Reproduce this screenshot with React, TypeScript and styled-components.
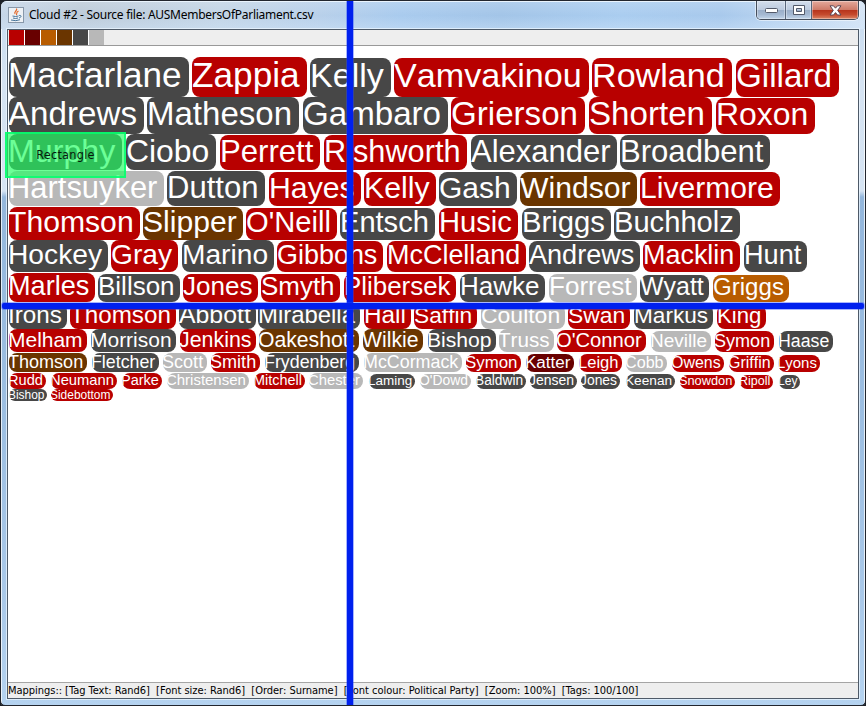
import React from "react";
import styled, { createGlobalStyle } from "styled-components";

const palette = {
  r: "#b80000",
  m: "#680000",
  o: "#b85c00",
  b: "#6a3500",
  d: "#474747",
  l: "#b8b8b8",
};
type Tone = keyof typeof palette;

/* name, tone, left edge, right edge */
type Tag = [string, Tone, number, number];
type Line = { top: number; bottom: number; base: number; tags: Tag[] };

const lines: Line[] = [
  { top: 57, bottom: 97, base: 87, tags: [
    ["Macfarlane", "d", 9, 189], ["Zappia", "r", 192, 307], ["Kelly", "d", 310, 391],
    ["Vamvakinou", "r", 394, 589], ["Rowland", "r", 592, 732], ["Gillard", "r", 736, 839]] },
  { top: 97, bottom: 134, base: 125, tags: [
    ["Andrews", "d", 9, 144], ["Matheson", "d", 147, 299], ["Gambaro", "d", 303, 448],
    ["Grierson", "r", 451, 585], ["Shorten", "r", 589, 712], ["Roxon", "r", 716, 815]] },
  { top: 134, bottom: 170, base: 162, tags: [
    ["Murphy", "d", 9, 122], ["Ciobo", "d", 126, 216], ["Perrett", "r", 220, 320],
    ["Rishworth", "r", 324, 467], ["Alexander", "d", 471, 617], ["Broadbent", "d", 620, 770]] },
  { top: 171, bottom: 206, base: 198, tags: [
    ["Hartsuyker", "l", 9, 164], ["Dutton", "d", 167, 265], ["Hayes", "r", 269, 361],
    ["Kelly", "r", 364, 436], ["Gash", "d", 439, 517], ["Windsor", "b", 520, 637],
    ["Livermore", "r", 640, 780]] },
  { top: 207, bottom: 240, base: 232, tags: [
    ["Thomson", "r", 9, 140], ["Slipper", "b", 143, 243], ["O'Neill", "r", 246, 337],
    ["Entsch", "d", 340, 435], ["Husic", "r", 439, 518], ["Briggs", "d", 522, 611],
    ["Buchholz", "d", 614, 740]] },
  { top: 240, bottom: 272, base: 264, tags: [
    ["Hockey", "d", 9, 108], ["Gray", "r", 111, 178], ["Marino", "d", 182, 274],
    ["Gibbons", "r", 277, 383], ["McClelland", "r", 387, 526], ["Andrews", "d", 529, 640],
    ["Macklin", "r", 643, 740], ["Hunt", "d", 744, 807]] },
  { top: 273, bottom: 302, base: 295, tags: [
    ["Marles", "r", 9, 95], ["Billson", "d", 98, 180], ["Jones", "r", 183, 258],
    ["Smyth", "r", 261, 340], ["Plibersek", "r", 344, 456], ["Hawke", "d", 460, 545],
    ["Forrest", "l", 549, 637], ["Wyatt", "d", 640, 709], ["Griggs", "o", 713, 789]] },
  { top: 303, bottom: 329, base: 323, tags: [
    ["Irons", "d", 9, 67], ["Thomson", "r", 70, 176], ["Abbott", "d", 179, 256],
    ["Mirabella", "d", 258, 360], ["Hall", "r", 364, 411], ["Saffin", "r", 414, 477],
    ["Coulton", "l", 481, 565], ["Swan", "r", 568, 630], ["Markus", "d", 634, 713],
    ["King", "r", 717, 766]] },
  { top: 329, bottom: 352, base: 347, tags: [
    ["Melham", "r", 9, 87], ["Morrison", "d", 91, 176], ["Jenkins", "r", 180, 256],
    ["Oakeshott", "b", 259, 359], ["Wilkie", "b", 363, 423], ["Bishop", "d", 428, 496],
    ["Truss", "l", 499, 554], ["O'Connor", "r", 557, 646], ["Neville", "l", 651, 711],
    ["Symon", "r", 715, 774], ["Haase", "d", 779, 833]] },
  { top: 353, bottom: 372, base: 368, tags: [
    ["Thomson", "b", 9, 87], ["Fletcher", "d", 92, 159], ["Scott", "l", 163, 207],
    ["Smith", "r", 211, 260], ["Frydenberg", "d", 265, 359], ["McCormack", "l", 364, 462],
    ["Symon", "r", 466, 521], ["Katter", "m", 526, 574], ["Leigh", "r", 579, 622],
    ["Cobb", "l", 626, 667], ["Owens", "r", 672, 724], ["Griffin", "r", 729, 774],
    ["Lyons", "r", 778, 820]] },
  { top: 373, bottom: 389, base: 385, tags: [
    ["Rudd", "r", 9, 46], ["Neumann", "r", 51, 117], ["Parke", "r", 122, 162],
    ["Christensen", "l", 167, 249], ["Mitchell", "r", 254, 305], ["Chester", "l", 309, 363],
    ["Laming", "d", 369, 415], ["O'Dowd", "l", 420, 471], ["Baldwin", "d", 476, 526],
    ["Jensen", "d", 530, 577], ["Jones", "d", 581, 620], ["Keenan", "d", 626, 675],
    ["Snowdon", "r", 680, 735], ["Ripoll", "r", 740, 773], ["Ley", "d", 779, 800]] },
  { top: 389, bottom: 401, base: 399, tags: [
    ["Bishop", "d", 9, 47], ["Sidebottom", "r", 51, 113]] },
];

/* Advance widths of the tag typeface, in thousandths of an em. */
const advances: Record<string, number> = {
  f: 278, i: 222, j: 222, l: 222, t: 278, r: 333, m: 833, w: 722, c: 500, k: 500, s: 500,
  v: 500, x: 500, y: 500, z: 500, A: 667, B: 667, C: 722, D: 722, E: 667, F: 611, G: 778,
  H: 722, I: 278, J: 500, K: 667, L: 556, M: 833, N: 722, O: 778, P: 667, R: 722, S: 667,
  T: 611, V: 667, W: 944, Z: 611, "'": 191,
};

/* Small tags start their text just ahead of the box, as does the first column. */
const leadIn = (left: number, height: number) => (left === 9 || height < 24 ? 1 : 0);

const fontSizeFor = (name: string, width: number) => {
  const em = [...name].reduce((sum, ch) => sum + (advances[ch] ?? 556), 0) / 1000;
  return width / (em + 0.21);
};

const GlobalStyle = createGlobalStyle`
  * { box-sizing: border-box; }
  body { margin: 0; overflow: hidden; background: #1d2026; }
`;

const Window = styled.div`
  position: relative;
  width: 866px;
  height: 706px;
  display: flex;
  flex-direction: column;
  border-radius: 7px 7px 5px 5px;
  border: 1px solid #22262e;
  padding: 0 5px 5px;
  background:
    linear-gradient(90deg, rgba(255,255,255,.75) 0 1px, transparent 1px 863px, rgba(255,255,255,.75) 863px),
    linear-gradient(#c7dbf0 0, #d5e3f2 80px, #d6e4f3 190px, #94b7dc 196px, #9dbfe2 420px, #aac9e9 600px, #b5d3f0 706px);
  overflow: hidden;
`;

const TitleBar = styled.header`
  flex: none;
  height: 28px;
  margin: 0 -5px;
  padding: 0 6px 0 7px;
  display: flex;
  align-items: flex-start;
  border-top: 1px solid #eaf4fd;
  background:
    linear-gradient(rgba(255,255,255,.15), transparent 50%, rgba(210,230,250,.4)),
    linear-gradient(90deg, #c6d6e8 0, #bdcbd9 80px, #c3d5e6 220px, #b8d0ea 320px, #a9cbee 400px, #a3c5e8 500px, #aacdf0 620px, #a8c9ec 720px, #c0d8f2 800px, #d5e4f5 864px);
`;

const JavaIcon = styled.svg`
  flex: none;
  width: 16px;
  height: 16px;
  margin-top: 5px;
`;

const Title = styled.h1`
  flex: 1;
  margin: 4px 0 0 5px;
  font: 400 12px/18px "Noto Sans", sans-serif;
  letter-spacing: -0.28px;
  white-space: nowrap;
  color: #000;
`;

const Controls = styled.div`
  display: flex;
  height: 19px;
  margin-top: -1px;
  border: 1px solid #454e5c;
  border-top: 0;
  border-radius: 0 0 5px 5px;
  overflow: hidden;
  box-shadow: 0 0 0 1px rgba(255,255,255,.5);
`;

const Control = styled.button<{ $width: number; $close?: boolean }>`
  width: ${(p) => p.$width}px;
  padding: 0;
  border: 0;
  border-left: ${(p) => (p.$width === 28 ? "0" : "1px solid #59677b")};
  display: flex;
  align-items: center;
  justify-content: center;
  background: ${(p) =>
    p.$close
      ? "linear-gradient(#e4aa9c 0, #cf7b69 48%, #b6331b 50%, #c54a2d 75%, #dc8666 100%)"
      : "linear-gradient(#d3deec 0, #bdcbdf 48%, #9aaec8 50%, #a5b9d2 75%, #c2d5e9 100%)"};
  box-shadow: inset 0 0 0 1px rgba(255,255,255,.35);
`;

const Client = styled.main`
  flex: 1;
  min-height: 0;
  display: flex;
  flex-direction: column;
  border: 1px solid #4e5a68;
  outline: 1px solid rgba(235,245,255,.75);
  margin: 0 1px 1px;
  background: #fff;
`;

const Legend = styled.div`
  flex: none;
  display: flex;
  gap: 1px;
  height: 16px;
  padding-left: 1px;
  background: #eee;
  border-bottom: 1px solid #999;
`;

const Swatch = styled.span<{ $tone: Tone }>`
  width: 15px;
  height: 15px;
  background: ${(p) => palette[p.$tone]};
  box-shadow: 1px 0 #fff;
  &:last-child { box-shadow: none; }
`;

const Cloud = styled.section`
  flex: 1;
  min-height: 0;
  padding-top: 11px;
`;

const Row = styled.div<{ $height: number; $gap: number }>`
  display: flex;
  align-items: flex-end;
  height: ${(p) => p.$height}px;
  margin-bottom: ${(p) => p.$gap}px;
`;

const Chip = styled.span<{ $tone: Tone; $width: number; $lead: number; $height: number }>`
  flex: none;
  display: flex;
  align-items: flex-start;
  width: ${(p) => p.$width}px;
  height: ${(p) => p.$height}px;
  margin-left: ${(p) => p.$lead}px;
  border-radius: ${(p) => Math.min(8, p.$height / 2)}px;
  background: ${(p) => palette[p.$tone]};
`;

const Name = styled.span<{ $size: number; $base: number; $indent: number }>`
  margin-top: ${(p) => p.$base - Math.round(p.$size * 0.905)}px;
  margin-left: ${(p) => -p.$indent}px;
  font-family: "Liberation Sans", Arial, sans-serif;
  font-size: ${(p) => p.$size}px;
  line-height: ${(p) => Math.round(p.$size * 0.905) + Math.round(p.$size * 0.212)}px;
  font-kerning: none;
  font-variant-ligatures: none;
  white-space: nowrap;
  color: #fff;
`;

const StatusBar = styled.footer`
  flex: none;
  height: 16px;
  border-top: 1px solid #a5a5a5;
  background: #eee;
  font: 11px/15px "DejaVu Sans Condensed", "DejaVu Sans", sans-serif;
  font-stretch: condensed;
  letter-spacing: -0.03px;
  white-space: pre;
  color: #000;
`;

const Divider = styled.i<{ $vertical?: boolean }>`
  position: absolute;
  background: #0020ee;
  box-shadow: 0 0 0 1px rgba(40,70,255,.4);
  ${(p) =>
    p.$vertical
      ? "left: 346px; top: -1px; width: 6px; height: 708px;"
      : "left: 1px; top: 302px; width: 862px; height: 6px; border-radius: 2px;"}
`;

const Selection = styled.div`
  position: absolute;
  left: 4px;
  top: 131px;
  width: 121px;
  height: 46px;
  border: 2px solid rgba(0, 255, 110, .8);
  background: rgba(36, 255, 100, .67);
  display: flex;
  align-items: center;
  justify-content: center;
  font: 12.500px/14px "DejaVu Sans Condensed", "DejaVu Sans", sans-serif;
  font-stretch: condensed;
  letter-spacing: 0.300px;
  color: #061a0c;
`;

const App = () => (
  <>
    <GlobalStyle />
    <Window>
      <TitleBar>
        <JavaIcon viewBox="0 0 16 16">
          <rect x=".5" y=".5" width="15" height="15" fill="#edf1f5" stroke="#8898aa" />
          <path d="M8.5 1.5c1.5 2-3 3-1.500 5.500M10.500 4c-3 1.500-1 2.500-2.300 4" fill="none" stroke="#e26a2c" strokeWidth="1.200" />
          <path d="M4.500 9q3 1 6 0M5 11q2.500 1 5 0M3 13q5 1.500 9-.3M11 8.500c3-.6 2.500 2 0 2.500" fill="none" stroke="#46749a" />
        </JavaIcon>
        <Title>Cloud #2 - Source file: AUSMembersOfParliament.csv</Title>
        <Controls>
          <Control $width={28} aria-label="Minimize">
            <svg width="13" height="6"><rect x=".5" y=".5" width="12" height="4" rx="1" fill="#fff" stroke="#535a6a" transform="translate(0 1)" /></svg>
          </Control>
          <Control $width={26} aria-label="Maximize">
            <svg width="12" height="10"><path d="M.5.5h11v9H.5zM3.500 3.500h5v3h-5z" fill="#fff" fillRule="evenodd" stroke="#535a6a" /></svg>
          </Control>
          <Control $width={47} $close aria-label="Close">
            <svg width="13" height="11"><path d="M1 .8h3.500l2 2.400 2-2.400H12L8.700 5.400 12 10H8.500l-2-2.400-2 2.400H1l3.300-4.600z" fill="#fff" stroke="#5b4553" /></svg>
          </Control>
        </Controls>
      </TitleBar>
      <Client>
        <Legend>
          {(Object.keys(palette) as Tone[]).map((tone) => <Swatch key={tone} $tone={tone} />)}
        </Legend>
        <Cloud>
          {lines.map((line, i) => {
            const next = lines[i + 1];
            const full = line.bottom - line.top;
            const sizes = line.tags.map(([name, , left, right]) => fontSizeFor(name, right - left + leadIn(left, full)));
            return (
              <Row key={line.top} $height={full} $gap={next ? next.top - line.bottom : 0}>
                {line.tags.map(([name, tone, left, right], j) => {
                  const shrink = Math.max(0, Math.min(2, Math.round((sizes[0] - sizes[j]) * 0.9)));
                  return (
                    <Chip
                      key={left}
                      $tone={tone}
                      $width={right - left}
                      $lead={left - (j ? line.tags[j - 1][3] : 8)}
                      $height={full - shrink}
                    >
                      <Name $size={sizes[j]} $base={line.base - line.top - shrink} $indent={leadIn(left, full)}>
                        {name}
                      </Name>
                    </Chip>
                  );
                })}
              </Row>
            );
          })}
        </Cloud>
        <StatusBar>Mappings:: [Tag Text: Rand6]  [Font size: Rand6]  [Order: Surname]  [Font colour: Political Party]  [Zoom: 100%]  [Tags: 100/100]</StatusBar>
      </Client>
      <Selection>Rectangle</Selection>
      <Divider $vertical />
      <Divider />
    </Window>
  </>
);

export default App;
